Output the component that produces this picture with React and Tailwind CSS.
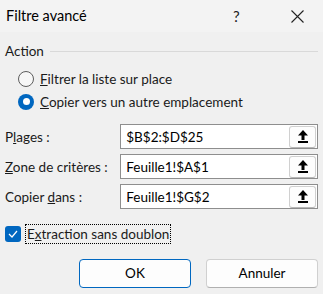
import React from "react";

const font = { fontFamily: 'Lato, "Noto Sans", sans-serif' };

const UploadIcon = () => (
    <svg width="10" height="13" viewBox="0 0 10 13">
        <path d="M5 0 L10 5.5 L6.5 5.5 L6.5 10 L3.5 10 L3.5 5.5 L0 5.5 Z" fill="#000" />
        <rect x="0" y="11" width="10" height="2" fill="#000" />
    </svg>
);

const RefField = ({ label, value }) => (
    <div className="flex items-center h-[25px]">
        <div className="w-[116px] whitespace-nowrap text-[13.5px] leading-[20px] text-[#1a1a1a]">{label}</div>
        <div className="flex items-center w-[199px] h-[25px] bg-white border border-[#8e8e8e] pl-[5px] pr-[1px]">
            <span className="flex-1 text-[13.5px] leading-[20px] text-black">{value}</span>
            <div className="w-[27px] h-[22px] rounded-[3px] border border-[#d0d0d0] border-b-[#b8b8b8] bg-[#fdfdfd] flex items-center justify-center">
                <UploadIcon />
            </div>
        </div>
    </div>
);

const Radio = ({ checked, children }) => (
    <div className="flex items-center h-[23px] pl-[13px] gap-[6px]">
        {checked ? (
            <div className="w-[16px] h-[16px] rounded-full bg-[#0067c0] flex items-center justify-center">
                <div className="w-[7px] h-[7px] rounded-full bg-white" />
            </div>
        ) : (
            <div className="w-[16px] h-[16px] rounded-full border border-[#5d5d5d] bg-[#f7f7f7]" />
        )}
        <span className="text-[13.5px] leading-[20px] text-[#1a1a1a]">{children}</span>
    </div>
);

export default function App() {
    return (
        <div className="w-[323px] h-[294px] bg-[#f0f0f0] flex flex-col" style={font}>
            {/* title bar */}
            <div className="h-[32px] bg-[#f3f3f3] flex items-center pl-[6px]">
                <span className="flex-1 text-[14.5px] text-black">Filtre avancé</span>
                <span className="w-[12px] text-[15px] text-[#222] mr-[46px]">?</span>
                <svg width="13" height="13" viewBox="0 0 13 13" className="mr-[19px]">
                    <path d="M0.5 0.5 L12.5 12.5 M12.5 0.5 L0.5 12.5" stroke="#222" strokeWidth="1.1" />
                </svg>
            </div>

            <div className="flex flex-col px-[5px]">
                {/* Action group */}
                <div className="flex items-center mt-[9px] h-[20px]">
                    <span className="text-[13.5px] leading-[20px] text-[#1a1a1a]">Action</span>
                    <div className="flex-1 h-px bg-[#d9d9d9] ml-[6px]" />
                </div>
                <div className="flex flex-col mt-[6px]">
                    <Radio><u>F</u>iltrer la liste sur place</Radio>
                    <Radio checked><u>C</u>opier vers un autre emplacement</Radio>
                </div>

                <div className="flex flex-col gap-[5px] mt-[11px]">
                    <RefField label={<>P<u>l</u>ages :</>} value="$B$2:$D$25" />
                    <RefField label={<><u>Z</u>one de critères :</>} value="Feuille1!$A$1" />
                    <RefField label={<>Copier <u>d</u>ans :</>} value="Feuille1!$G$2" />
                </div>

                <div className="flex items-center mt-[16px] h-[18px] gap-[4px]">
                    <div className="w-[16px] h-[16px] rounded-[3px] bg-[#0067c0] flex items-center justify-center">
                        <svg width="10" height="8" viewBox="0 0 10 8">
                            <path d="M1 4 L4 7 L9 1" stroke="#fff" strokeWidth="1.2" fill="none" />
                        </svg>
                    </div>
                    <span className="text-[13.5px] leading-[18px] text-[#1a1a1a] border border-dotted border-black px-[1px]">
                        E<u>x</u>traction sans doublon
                    </span>
                </div>

                <div className="flex justify-end gap-[15px] mt-[16px]">
                    <button className="w-[112px] h-[29px] rounded-[4px] border border-[#0067c0] bg-[#fdfdfd] text-[13.5px] text-black">
                        OK
                    </button>
                    <button className="w-[112px] h-[29px] rounded-[4px] border border-[#d0d0d0] border-b-[#b0b0b0] bg-[#fdfdfd] text-[13.5px] text-black">
                        Annuler
                    </button>
                </div>
            </div>
        </div>
    );
}
